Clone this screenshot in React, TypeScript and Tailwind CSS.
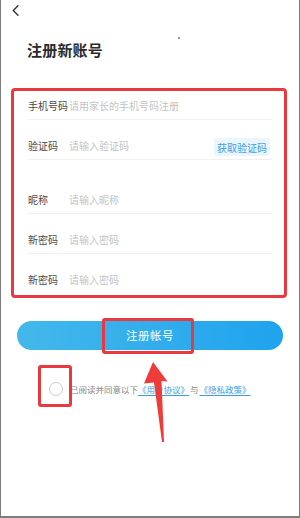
import React from "react";

const font = { fontFamily: '"Noto Sans CJK SC", "Noto Sans", sans-serif' };

function Row({ label, placeholder, pt, extra }: { label: string; placeholder: string; pt: string; extra?: React.ReactNode }) {
  return (
    <div className={`${pt} border-b border-[#efefef]`}>
      <div className="h-[27px] flex items-center">
        <span className="w-[41px] shrink-0 text-[10px] leading-[14px] text-[#4a4a4a] whitespace-nowrap">{label}</span>
        <span className="flex-1 text-[10px] leading-[14px] text-[#c4c4c4] whitespace-nowrap">{placeholder}</span>
        {extra}
      </div>
    </div>
  );
}

export default function App() {
  return (
    <div
      className="relative w-[300px] h-[518px] bg-white border-l border-r border-b-2 border-[#7d7d7d] overflow-hidden"
      style={font}
    >
      {/* header */}
      <div className="h-[20px] flex items-center pl-[11px]">
        <svg width="8" height="11" viewBox="0 0 8 11" fill="none">
          <path d="M6 0.8 L1.3 5.5 L6 10.2" stroke="#333" strokeWidth="1.4" strokeLinecap="round" strokeLinejoin="round" />
        </svg>
      </div>
      <div className="absolute left-[177px] top-[37px] w-[1.5px] h-[1.5px] bg-[#777] rounded-full" />

      <h1 className="mt-[20px] ml-[26px] text-[15px] leading-[20px] font-bold text-[#2b2b2b] tracking-[0.2px]">注册新账号</h1>

      {/* form box */}
      <div className="mt-[28px] ml-[10px] w-[276px] border-[3px] border-[#e9383f] rounded-[4px] pl-[14px] pr-[12px] pb-[2px]">
        <Row label="手机号码" placeholder="请用家长的手机号码注册" pt="pt-[1px]" />
        <Row
          label="验证码"
          placeholder="请输入验证码"
          pt="pt-[12px]"
          extra={
            <span className="mr-[2px] mt-[3px] h-[18px] px-[3px] flex items-center rounded-[3px] bg-[#eaf5fd] text-[10px] text-[#3a9fe6] whitespace-nowrap">
              获取验证码
            </span>
          }
        />
        <Row label="昵称" placeholder="请输入昵称" pt="pt-[26px]" />
        <Row label="新密码" placeholder="请输入密码" pt="pt-[12px]" />
        <div className="pt-[12px]">
          <div className="h-[27px] flex items-center">
            <span className="w-[41px] shrink-0 text-[10px] leading-[14px] text-[#4a4a4a]">新密码</span>
            <span className="flex-1 text-[10px] leading-[14px] text-[#c4c4c4]">请输入密码</span>
          </div>
        </div>
      </div>

      {/* register button */}
      <div className="relative mt-[23px] ml-[16px] w-[266px] h-[29px] rounded-full bg-gradient-to-r from-[#43b8ea] to-[#1ea3ee] flex items-center justify-center">
        <span className="text-[11.5px] text-white tracking-[0.5px]">注册帐号</span>
        <div className="absolute left-[85px] top-[-3px] w-[92px] h-[36px] border-[3px] border-[#e9383f] rounded-[3px]" />
      </div>

      {/* agreement */}
      <div className="relative mt-[32px] ml-[48px] flex items-center h-[14px]">
        <div className="w-[14px] h-[14px] rounded-full border border-[#cfcfcf] shrink-0" />
        <div className="ml-[7px] text-[8.5px] leading-[12px] text-[#888] whitespace-nowrap">
          已阅读并同意以下<span className="text-[#3a9ee6] underline underline-offset-2">《用户协议》</span>
          <span className="mx-[1px]">与</span>
          <span className="text-[#3a9ee6] underline underline-offset-2">《隐私政策》</span>
        </div>
        <div className="absolute left-[-11px] top-[-17px] w-[34px] h-[42px] border-[3px] border-[#e9383f] rounded-[3px]" />
      </div>

      {/* arrow annotation */}
      <svg className="absolute left-0 top-0" width="300" height="518" viewBox="0 0 300 518">
        <polygon
          points="152,362 166.5,381.5 160.5,381 163,442 161,442 153,382.5 143,383.5"
          fill="#ef3b3b"
        />
      </svg>
    </div>
  );
}
